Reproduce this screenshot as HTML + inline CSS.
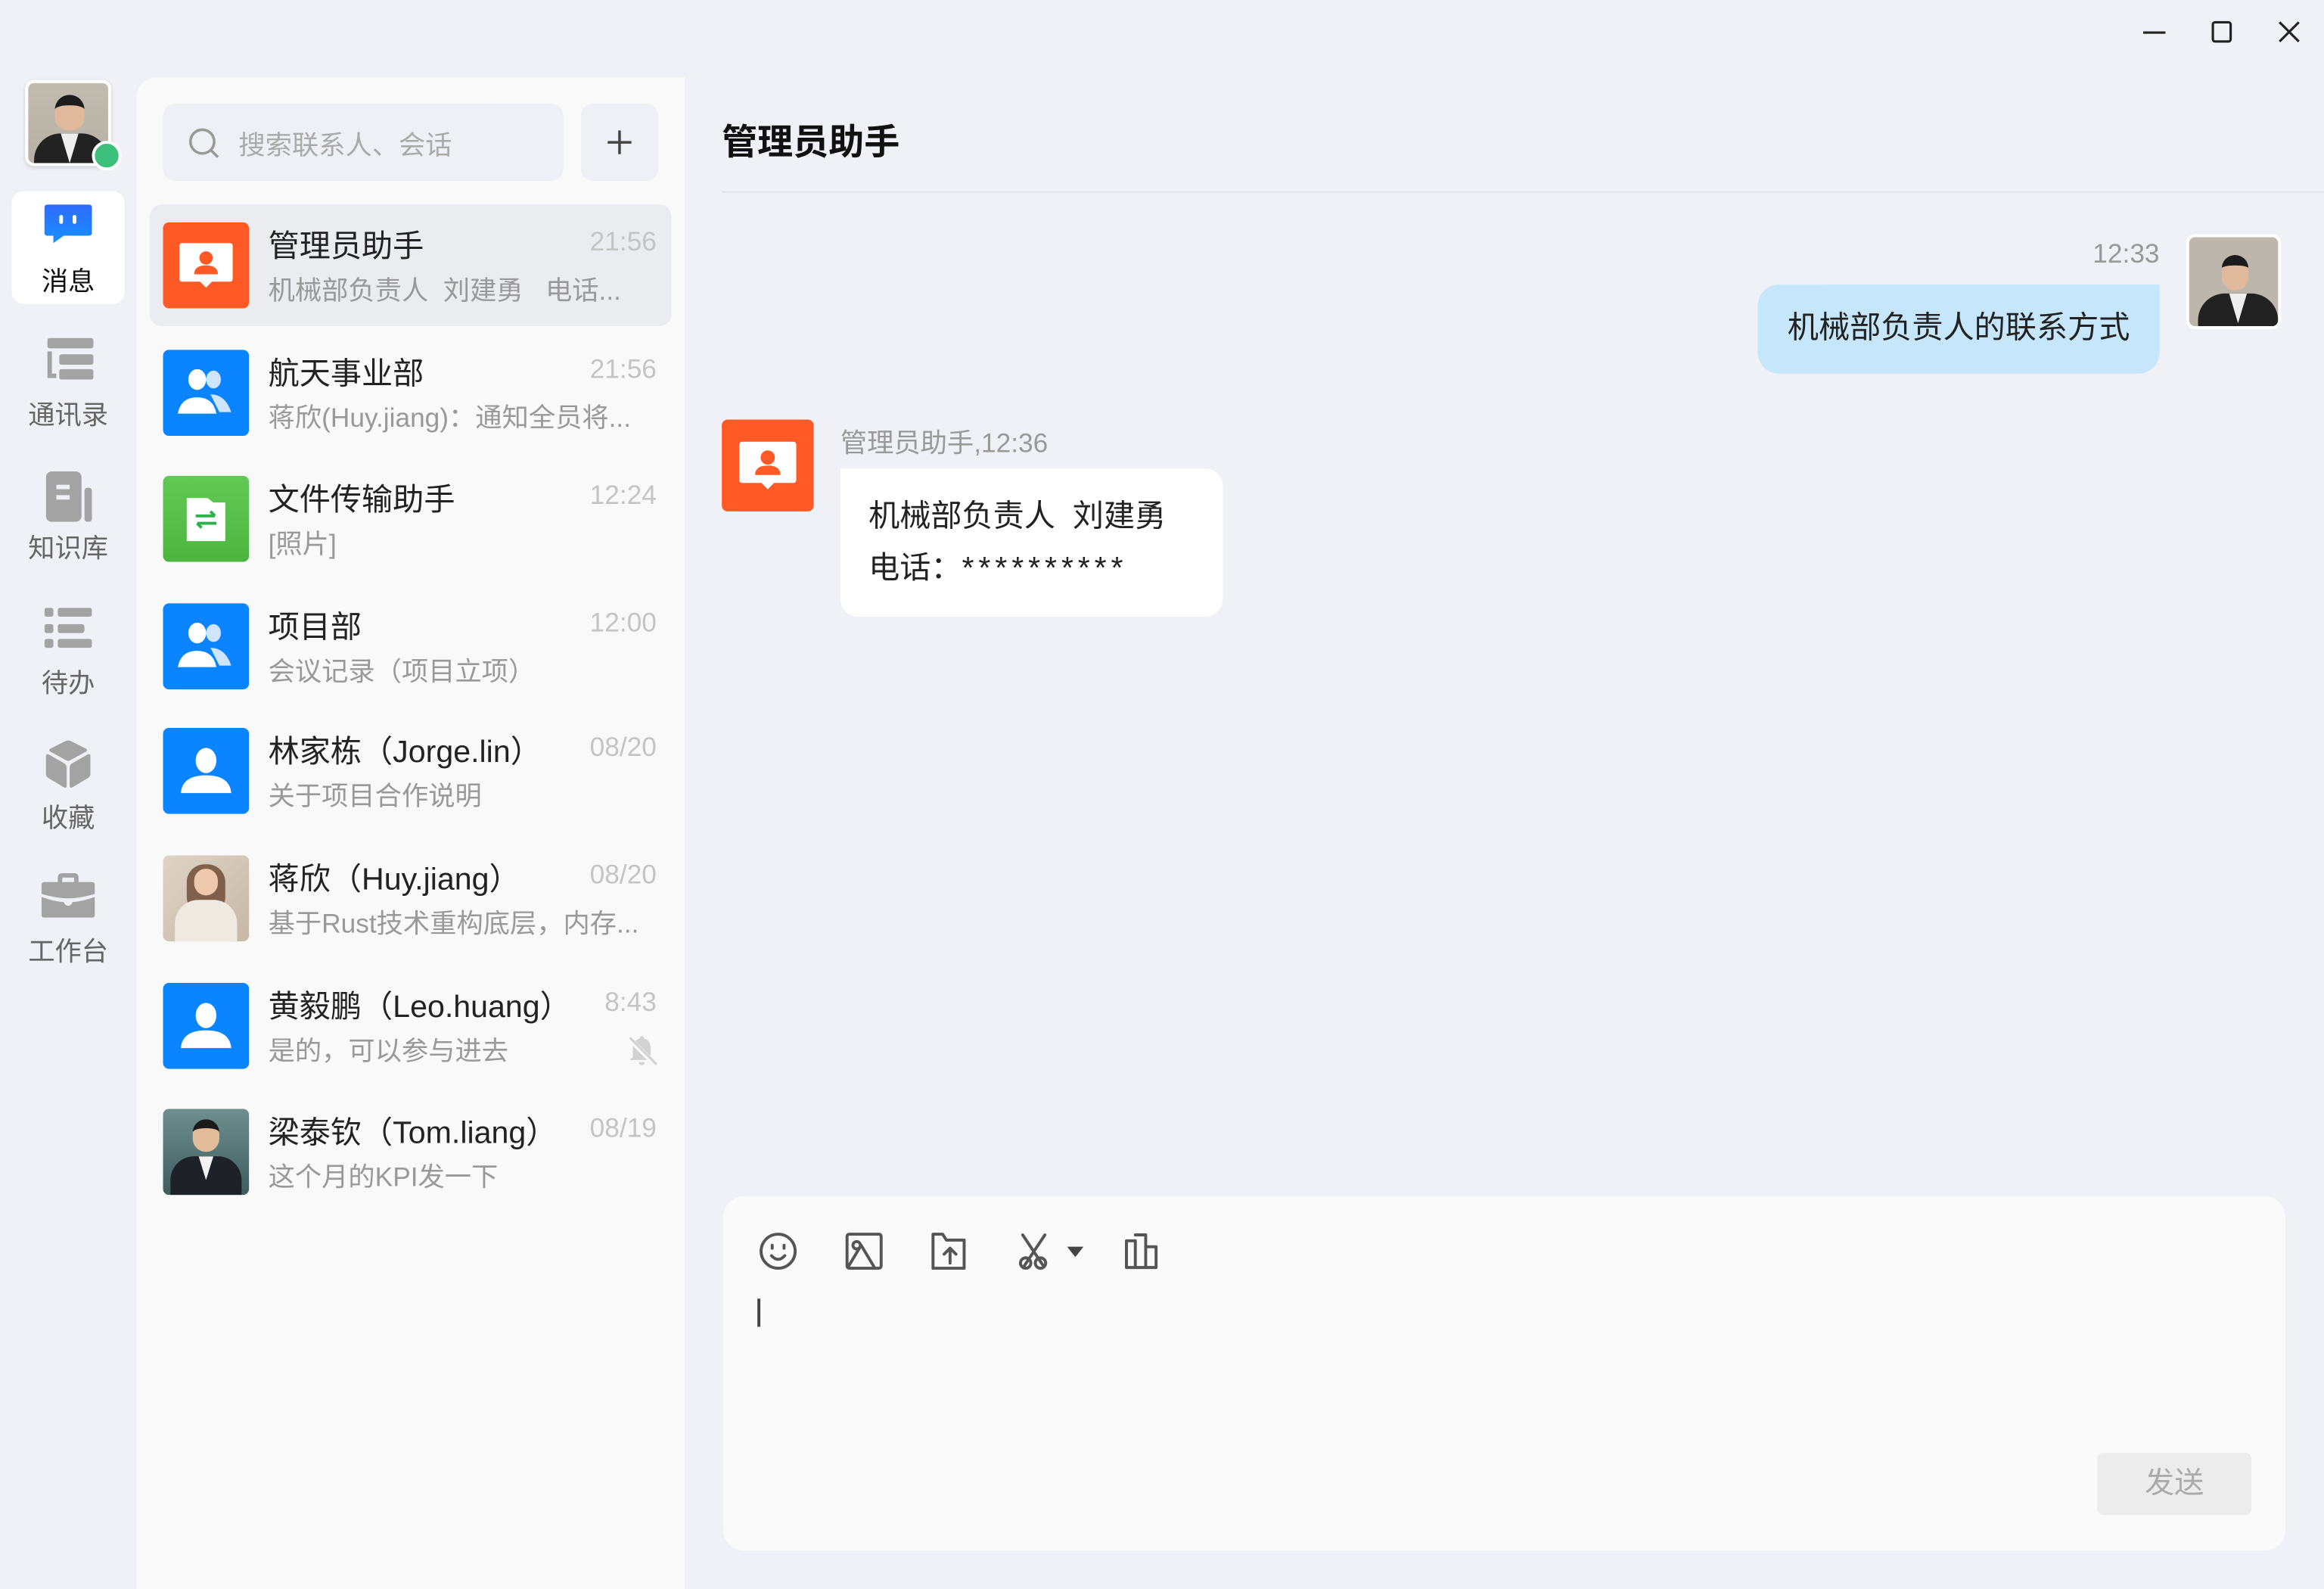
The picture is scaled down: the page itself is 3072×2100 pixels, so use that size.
<!DOCTYPE html>
<html><head><meta charset="utf-8"><style>
*{margin:0;padding:0;box-sizing:border-box}
html,body{width:3072px;height:2100px;overflow:hidden;background:#f0f1f6}
#r{position:absolute;left:0;top:0;width:1568px;height:1072px;transform:scale(1.9592);transform-origin:0 0;font-family:"Liberation Sans","Noto Sans CJK SC",sans-serif;color:#222}
.a{position:absolute}
.nav{position:absolute;left:0;width:92px;text-align:center;font-size:18px;color:#666}
.list{position:absolute;left:92px;top:52px;width:370px;height:1020px;background:#f9f9fa;border-top-left-radius:14px}
.item{position:absolute;left:9px;width:352px;height:82px;border-radius:8px}
.av{position:absolute;left:9px;top:12px;width:58px;height:58px;border-radius:4px;overflow:hidden}
.t{position:absolute;left:80px;top:12px;font-size:21px;color:#222;white-space:nowrap}
.s{position:absolute;left:80px;top:44px;font-size:18px;color:#999;white-space:nowrap}
.tm{position:absolute;right:10px;top:15px;font-size:18px;color:#c4c4c4}
</style></head><body><div id="r">

<svg class="a" style="left:1440px;top:10px" width="120" height="24" viewBox="0 0 120 24"><g stroke="#222" stroke-width="1.6" fill="none"><path d="M6 12H21"/><rect x="53" y="5" width="12" height="13" rx="1.5"/><path d="M98 5L111 18M111 5L98 18"/></g></svg>

<div class="a" style="left:17px;top:54px;width:58px;height:58px;border-radius:6px;border:2px solid #fff;overflow:hidden;background:linear-gradient(#c2bbb0,#b7b0a5);box-shadow:0 1px 3px rgba(0,0,0,.15)">
<div class="a" style="left:18px;top:8px;width:20px;height:24px;border-radius:10px 10px 9px 9px;background:#e0b99c;border-top:7px solid #1c1c1c"></div>
<div class="a" style="left:4px;top:34px;width:50px;height:30px;border-radius:18px 18px 0 0;background:#222"></div>
<div class="a" style="left:22px;top:34px;width:12px;height:20px;background:#eee;clip-path:polygon(0 0,100% 0,50% 100%)"></div>
</div>
<div class="a" style="left:62px;top:95px;width:20px;height:20px;border-radius:50%;background:#3cbf7a;border:2px solid #fff"></div>

<div class="a" style="left:8px;top:129px;width:76px;height:76px;background:#fff;border-radius:8px"></div>
<svg class="a" style="left:29px;top:137px" width="34" height="32" viewBox="0 0 34 32"><defs><linearGradient id="g1" x1="0" y1="0" x2="0" y2="1"><stop offset="0" stop-color="#2f6bff"/><stop offset="1" stop-color="#1790ff"/></linearGradient></defs><path d="M3 1H31Q33 1 33 3V20Q33 22 31 22H14L7 27V22H3Q1 22 1 20V3Q1 1 3 1Z" fill="url(#g1)"/><rect x="11" y="8" width="2.5" height="6" rx="1.2" fill="#fff"/><rect x="20" y="8" width="2.5" height="6" rx="1.2" fill="#fff"/></svg>
<div class="nav" style="top:176px;color:#111">消息</div>

<svg class="a" style="left:30px;top:227px" width="34" height="32" viewBox="0 0 34 32"><g fill="#a3a3a3"><rect x="2" y="1" width="31" height="7" rx="1.5"/><rect x="10" y="12" width="23" height="7" rx="1.5"/><rect x="10" y="22" width="23" height="7" rx="1.5"/><path d="M2 10H5V25H8V28H2Z"/></g></svg>
<div class="nav" style="top:266px">通讯录</div>

<svg class="a" style="left:31px;top:318px" width="32" height="34" viewBox="0 0 32 34"><g fill="#a3a3a3"><rect x="0" y="0" width="24" height="34" rx="4"/><rect x="26" y="11" width="5" height="23" rx="2"/></g><g fill="#eef0f5"><rect x="7" y="9" width="9" height="3"/><rect x="7" y="16" width="9" height="3"/></g></svg>
<div class="nav" style="top:356px">知识库</div>

<svg class="a" style="left:30px;top:410px" width="32" height="28" viewBox="0 0 32 28"><g fill="#a3a3a3"><rect x="0" y="0" width="6" height="6" rx="1.5"/><rect x="0" y="11" width="6" height="6" rx="1.5"/><rect x="0" y="21" width="6" height="6" rx="1.5"/><rect x="9" y="0" width="23" height="6" rx="1.5"/><path d="M9 12.5Q9 11 10.5 11H25Q27 11 27 13V15Q27 17 25 17H10.5Q9 17 9 15.5Z"/><rect x="9" y="21" width="23" height="6" rx="1.5"/></g></svg>
<div class="nav" style="top:447px">待办</div>

<svg class="a" style="left:30px;top:499px" width="32" height="33" viewBox="0 0 32 33"><g fill="#a3a3a3"><path d="M14 1Q16 0 18 1L28 6Q29.5 7 28 8L17 14Q16 14.5 15 14L4 8Q2.5 7 4 6Z"/><path d="M1 11Q1 9 3 10L13.5 16Q15 17 15 19V31Q15 33 13 32L3 26Q1 25 1 23Z"/><path d="M31 11Q31 9 29 10L18.5 16Q17 17 17 19V31Q17 33 19 32L29 26Q31 25 31 23Z"/></g></svg>
<div class="nav" style="top:538px">收藏</div>

<svg class="a" style="left:28px;top:589px" width="36" height="30" viewBox="0 0 36 30"><g fill="#a3a3a3"><path d="M11 7V3Q11 0 14 0H22Q25 0 25 3V7H22V3H14V7Z"/><path d="M2 6H34Q36 6 36 8V14Q26 17 18 17Q10 17 0 14V8Q0 6 2 6Z"/><path d="M0 16Q8 19 15 19.5Q16 22 18 22Q20 22 21 19.5Q28 19 36 16V28Q36 30 34 30H2Q0 30 0 28Z"/></g></svg>
<div class="nav" style="top:628px">工作台</div>

<div class="list">
<div class="a" style="left:18px;top:18px;width:270px;height:52px;background:#eff0f5;border-radius:8px"></div>
<svg class="a" style="left:34px;top:33px" width="24" height="24" viewBox="0 0 24 24"><circle cx="10.5" cy="10.5" r="8" stroke="#999" stroke-width="1.8" fill="none"/><path d="M16 16L21 21" stroke="#999" stroke-width="1.8"/></svg>
<div class="a" style="left:69px;top:32px;font-size:18px;color:#aaa">搜索联系人、会话</div>
<div class="a" style="left:300px;top:18px;width:52px;height:52px;background:#eff0f5;border-radius:8px"></div>
<svg class="a" style="left:315px;top:33px" width="22" height="22" viewBox="0 0 22 22"><path d="M11 3V19M3 11H19" stroke="#444" stroke-width="1.8"/></svg>

<div class="item" style="top:86px;background:#ebecf0">
<div class="av" style="background:#ff5a26"><svg width="58" height="58" viewBox="0 0 58 58"><path d="M11 16Q11 14 13 14H45Q47 14 47 16V38Q47 40 45 40H33L29 44L25 40H13Q11 40 11 38Z" fill="#fff"/><circle cx="29" cy="24" r="4.5" fill="#ff5a26"/><path d="M21 35Q21 29 29 29Q37 29 37 35Z" fill="#ff5a26"/></svg></div>
<div class="t">管理员助手</div><div class="s">机械部负责人&nbsp; 刘建勇&nbsp;&nbsp; 电话...</div><div class="tm">21:56</div></div>

<div class="item" style="top:172px">
<div class="av" style="background:#0a84ff"><svg width="58" height="58" viewBox="0 0 58 58"><path d="M34 26a5 6 0 1 1 0.1 0M32 30Q42 30 46 42H38Z" fill="#cfe4ff"/><path d="M23 27a6 7 0 1 1 0.1 0M10 43Q12 32 23 32Q34 32 36 43Z" fill="#fff"/></svg></div>
<div class="t">航天事业部</div><div class="s">蒋欣(Huy.jiang)：通知全员将...</div><div class="tm">21:56</div></div>

<div class="item" style="top:257px">
<div class="av" style="background:linear-gradient(#62c955,#4db53f)"><svg width="58" height="58" viewBox="0 0 58 58"><path d="M16 15H30L34 18H42V44H16Z" fill="#fff"/><path d="M22 27H35M32 24L35 27M36 32H23M26 35L23 32" stroke="#2cb24a" stroke-width="2" fill="none"/></svg></div>
<div class="t">文件传输助手</div><div class="s">[照片]</div><div class="tm">12:24</div></div>

<div class="item" style="top:343px">
<div class="av" style="background:#0a84ff"><svg width="58" height="58" viewBox="0 0 58 58"><path d="M34 26a5 6 0 1 1 0.1 0M32 30Q42 30 46 42H38Z" fill="#cfe4ff"/><path d="M23 27a6 7 0 1 1 0.1 0M10 43Q12 32 23 32Q34 32 36 43Z" fill="#fff"/></svg></div>
<div class="t">项目部</div><div class="s">会议记录（项目立项）</div><div class="tm">12:00</div></div>

<div class="item" style="top:427px">
<div class="av" style="background:#0a84ff"><svg width="58" height="58" viewBox="0 0 58 58"><ellipse cx="29" cy="22" rx="7" ry="8.5" fill="#fff"/><path d="M12 44Q13 32 29 32Q45 32 46 44Z" fill="#fff"/></svg></div>
<div class="t">林家栋（Jorge.lin）</div><div class="s">关于项目合作说明</div><div class="tm">08/20</div></div>

<div class="item" style="top:513px">
<div class="av" style="background:linear-gradient(135deg,#ddd3c6,#c7b8a5)"><div class="a" style="left:16px;top:6px;width:26px;height:34px;border-radius:12px;background:#6b4530;opacity:.8"></div><div class="a" style="left:21px;top:9px;width:16px;height:18px;border-radius:8px;background:#edc8ad"></div><div class="a" style="left:8px;top:30px;width:42px;height:30px;border-radius:16px 16px 0 0;background:#efe9e1"></div></div>
<div class="t">蒋欣（Huy.jiang）</div><div class="s">基于Rust技术重构底层，内存...</div><div class="tm">08/20</div></div>

<div class="item" style="top:599px">
<div class="av" style="background:#0a84ff"><svg width="58" height="58" viewBox="0 0 58 58"><ellipse cx="29" cy="22" rx="7" ry="8.5" fill="#fff"/><path d="M12 44Q13 32 29 32Q45 32 46 44Z" fill="#fff"/></svg></div>
<div class="t">黄毅鹏（Leo.huang）</div><div class="s">是的，可以参与进去</div><div class="tm">8:43</div>
<svg class="a" style="left:320px;top:46px" width="24" height="24" viewBox="0 0 24 24"><path d="M12 2Q13.5 2 13.5 3.5Q18 5 18 10V16L20 18H4L6 16V10Q6 5 10.5 3.5Q10.5 2 12 2ZM10 19.5H14Q14 21.5 12 21.5Q10 21.5 10 19.5Z" fill="#d2d2d2"/><path d="M3 3L21 21" stroke="#f9f9fa" stroke-width="3.5"/><path d="M4 3L22 21" stroke="#d2d2d2" stroke-width="1.6"/></svg></div>

<div class="item" style="top:684px">
<div class="av" style="background:linear-gradient(#6f8f8f,#3e5c5e)"><div class="a" style="left:20px;top:7px;width:18px;height:22px;border-radius:9px;background:#e2bb9b;border-top:6px solid #1a1a1a"></div><div class="a" style="left:5px;top:32px;width:48px;height:28px;border-radius:16px 16px 0 0;background:#1e2228"></div><div class="a" style="left:24px;top:32px;width:10px;height:16px;background:#f2f2f2;clip-path:polygon(0 0,100% 0,50% 100%)"></div></div>
<div class="t">梁泰钦（Tom.liang）</div><div class="s">这个月的KPI发一下</div><div class="tm">08/19</div></div>
</div>

<div class="a" style="left:487px;top:76px;font-size:24px;font-weight:bold;color:#111">管理员助手</div>
<div class="a" style="left:487px;top:129px;width:1081px;height:1px;background:#e2e3e8"></div>

<div class="a" style="left:1390px;top:161px;width:67px;text-align:right;font-size:18px;color:#999">12:33</div>
<div class="a" style="left:1475px;top:158px;width:64px;height:64px;border-radius:6px;border:2px solid #fff;overflow:hidden;background:#bdb6ac">
<div class="a" style="left:22px;top:12px;width:18px;height:24px;border-radius:9px;background:#e0b99c;border-top:7px solid #1c1c1c"></div>
<div class="a" style="left:6px;top:38px;width:54px;height:30px;border-radius:18px 18px 0 0;background:#222"></div>
<div class="a" style="left:27px;top:38px;width:12px;height:20px;background:#eee;clip-path:polygon(0 0,100% 0,50% 100%)"></div>
</div>
<div class="a" style="left:1186px;top:192px;width:271px;height:60px;background:#c6e7fb;border-radius:14px 0 14px 14px;font-size:21px;line-height:60px;text-align:center;color:#222;white-space:nowrap">机械部负责人的联系方式</div>

<div class="a" style="left:487px;top:283px;width:62px;height:62px;border-radius:4px;background:#ff5a26"><svg width="62" height="62" viewBox="0 0 58 58"><path d="M11 16Q11 14 13 14H45Q47 14 47 16V38Q47 40 45 40H33L29 44L25 40H13Q11 40 11 38Z" fill="#fff"/><circle cx="29" cy="24" r="4.5" fill="#ff5a26"/><path d="M21 35Q21 29 29 29Q37 29 37 35Z" fill="#ff5a26"/></svg></div>
<div class="a" style="left:567px;top:285px;font-size:18px;color:#999">管理员助手,12:36</div>
<div class="a" style="left:567px;top:316px;width:258px;height:100px;background:#fff;border-radius:0 12px 12px 12px"></div>
<div class="a" style="left:586px;top:331px;font-size:21px;line-height:35px;color:#222;white-space:pre">机械部负责人&nbsp; 刘建勇
电话：<span style="letter-spacing:3px">**********</span></div>

<div class="a" style="left:488px;top:807px;width:1054px;height:239px;background:#fafafa;border-radius:14px"></div>
<svg class="a" style="left:510px;top:828px" width="280" height="34" viewBox="0 0 280 34"><g stroke="#555" stroke-width="2" fill="none" stroke-linecap="round" stroke-linejoin="round">
<circle cx="15" cy="16" r="11.5"/><path d="M11 12V14M19 12V14M10.5 19Q15 24 19.5 19"/>
<rect x="61.5" y="4.5" width="23" height="23" rx="1.5"/><circle cx="68" cy="12" r="2.5"/><path d="M62 27L71 12L80 27"/>
<path d="M119.5 27.5V4.5H126L128.5 8.5H140.5V27.5Z"/><path d="M131 24V14M127 18L131 14L135 18"/>
<path d="M180 5L194 26M195 5L181 26"/><circle cx="182" cy="24" r="3.5"/><circle cx="192" cy="24" r="3.5"/>
<path d="M250 27V9H256V27M256 5H263V27M263 13H270V27M250 27H270"/></g>
<path d="M210 13H221L215.5 20Z" fill="#444"/></svg>
<div class="a" style="left:511px;top:876px;width:1.5px;height:19px;background:#444"></div>
<div class="a" style="left:1415px;top:980px;width:104px;height:42px;background:#ececec;border-radius:4px;font-size:20px;line-height:42px;text-align:center;color:#aaa">发送</div>

</div></body></html>
